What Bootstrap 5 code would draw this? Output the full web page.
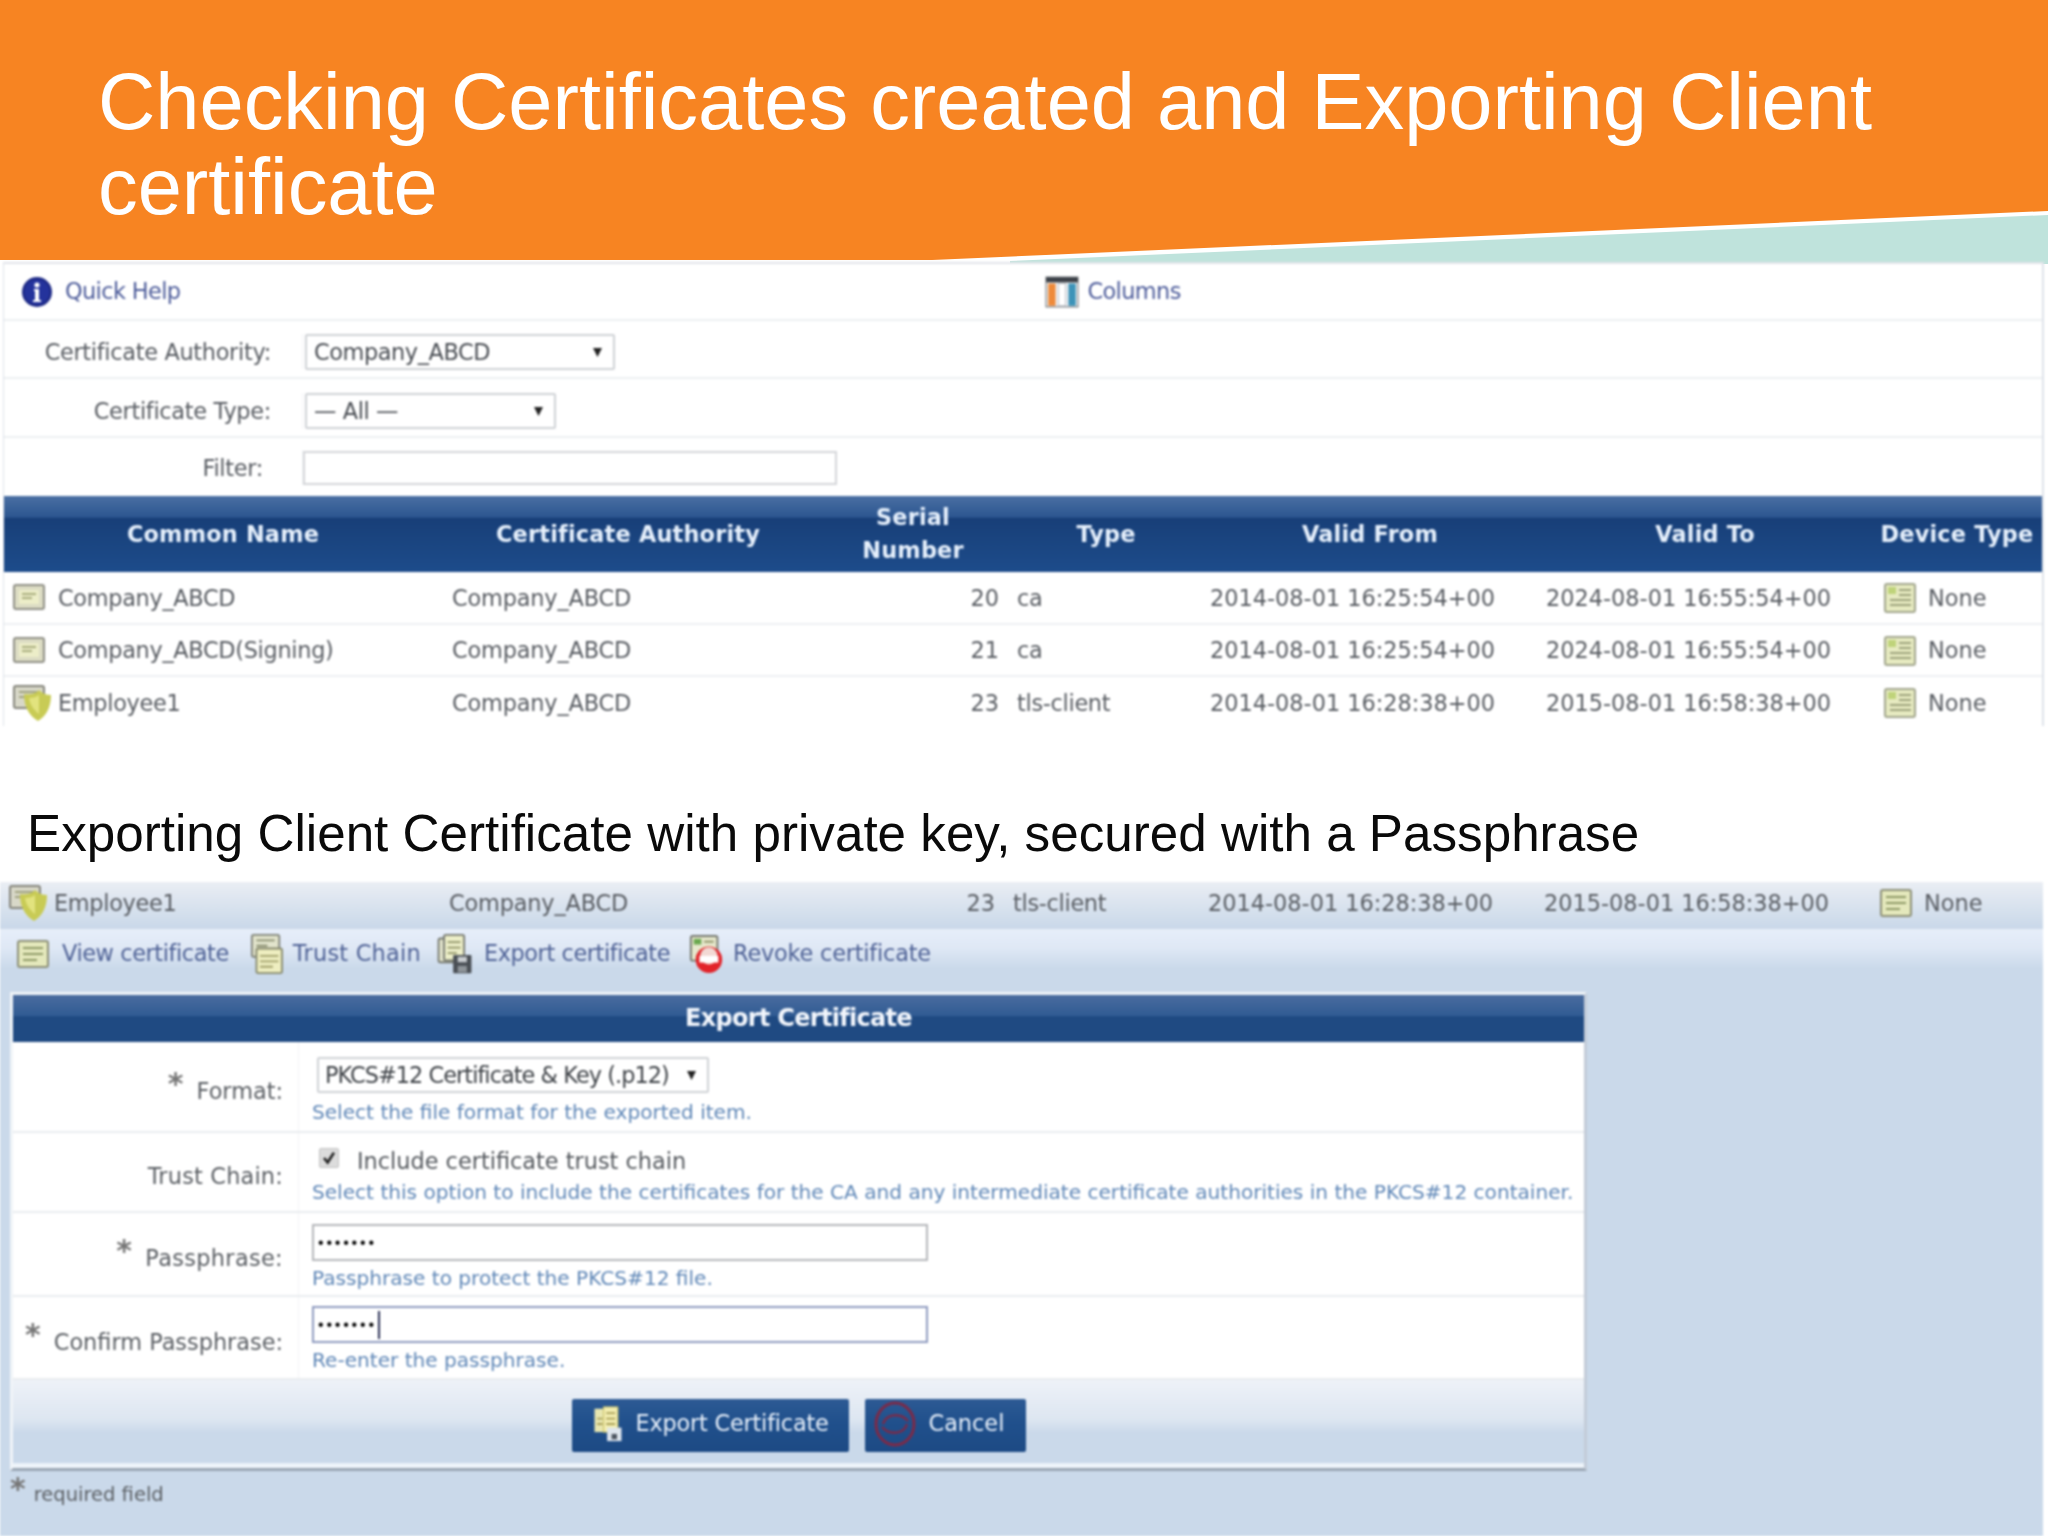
<!DOCTYPE html>
<html lang="en">
<head>
<meta charset="utf-8">
<title>Checking Certificates</title>
<link rel="stylesheet" href="https://cdn.jsdelivr.net/npm/bootstrap@5.3.0/dist/css/bootstrap.min.css">
<style>
html,body{margin:0;background:#fff;}
body{width:2048px;height:1536px;overflow:hidden;font-family:"DejaVu Sans",sans-serif;color:#595d63;}
.deck-banner{height:262px;padding:59px 0 0 98px;}
.deck-shape{left:0;top:0;}
.deck-title{font-family:"Liberation Sans",sans-serif;font-size:79.4px;line-height:85px;color:#fff;margin:0;font-weight:400;filter:blur(.5px);}
.shot-a{margin-left:3px;width:2041px;height:464px;overflow:hidden;background:#fff;border-left:1px solid #dfe3ea;border-right:2px solid #dfe3ea;border-top:2px solid #e2e4ea;filter:blur(.8px);font-size:22.4px;}
.bar-top{height:57px;padding-left:17px;border-bottom:2px solid #eceff2;}
.lnk{color:#4d5c9a;text-decoration:none;letter-spacing:-.6px;}
.lnk-help{margin-left:12px;}
.col-link{margin-left:865px;}
.flt{display:flex;align-items:center;border-bottom:2px solid #eceff2;}
.flt-a{height:58px;padding-top:5px}.flt-b{height:59px;padding-top:7px}.flt-c{height:58px;padding-top:1px;border-bottom:0}
.flt-lbl{width:299px;flex:none;text-align:right;padding:2px 31px 0 0;border-right:1px solid #f2f4f6;letter-spacing:-.3px;white-space:nowrap;}
.flt-c .flt-lbl{padding-right:39px;}
.flt-val{padding-left:2px;}
.pick{font-family:"DejaVu Sans",sans-serif;font-size:22.4px;color:#4a4e54;border:2px solid #cfd2d6;border-radius:2px;padding:0 24px 0 7px;line-height:30px;height:36px;letter-spacing:-.4px;background-position:right 10px center;background-size:11px 14px;background-image:url("data:image/svg+xml,%3Csvg xmlns='http://www.w3.org/2000/svg' viewBox='0 0 11 14'%3E%3Cpath d='M1 3h9L5.500 12z' fill='%23222'/%3E%3C/svg%3E");}
.pick-a{width:310px}.pick-b{width:251px}
.filter-box{width:534px;height:34px;border:2px solid #d4d6d9;border-radius:0;margin-left:-2px;padding:0;}
.tbl.table{--bs-table-bg:transparent;--bs-table-color:#595d63;table-layout:fixed;width:2040px;margin:0;}
.tbl td,.tbl th{padding:0;border:0;vertical-align:middle;white-space:nowrap;}
.tbl thead th{height:76px;text-align:center;color:#e6f0fc;font-weight:700;font-size:22.4px;line-height:33px;letter-spacing:.2px;background:linear-gradient(#4a6fa3 0,#2c5690 28%,#183f78 29%,#1d4c8b 100%);}
.tbl tbody td{height:52px;padding-top:2px;}
.tbl tbody tr+tr td{border-top:2px solid #eef0f3;}
.c1{padding-left:8px!important;letter-spacing:-.3px}.c2{padding-left:10px!important;letter-spacing:-.15px}.c3{padding-right:13px!important;text-align:right}.c4{padding-left:5px!important;letter-spacing:-.3px}.c5{padding-left:10px!important}.c6{padding-left:6px!important}.c7{padding-left:12px!important}
.ico{display:inline-block;vertical-align:middle;}
.ico-name{margin:-4px 12px 0 0;}
.ico-dev{margin:-2px 10px 0 0;}
.ico-sh{margin:-2px 6px 0 0;}
.deck-sub{height:156px;padding:81px 0 0 27px;}
.deck-sub h2{font-family:"Liberation Sans",sans-serif;font-size:51.2px;line-height:54px;font-weight:400;color:#0a0a0a;margin:0;filter:blur(.4px);}
.shot-b{width:2043px;height:654px;background:#cad9ea;filter:blur(.8px);font-size:22.4px;}
.emp-row{background:linear-gradient(#eaeef4,#c9d8e9);}
.emp-row .tbl tbody td{height:47px;padding-top:0;padding-bottom:4px;}
.emp-row .c5{padding-left:12px!important}.emp-row .c6{padding-left:8px!important}.emp-row .c2{padding-left:11px!important}
.acts{height:61px;padding:0 0 12px 16px;background:linear-gradient(#e6eefa 0,#dfe8f5 30%,#cad9ea 65%);border-top:1px solid #e8eef7;}
.acts a{color:#4f6296;text-decoration:none;white-space:nowrap;letter-spacing:-.4px;margin-right:19px;}
.acts .a-chain{letter-spacing:.25px;margin-right:14px;}
.acts .a-revoke{letter-spacing:-.2px;}
.ico-v{margin-right:12px;}
.ico-c{margin-right:8px;}
.ico-e{margin-right:9px;}
.ico-r{margin-right:8px;}
.dlg{margin:2px 0 0 10px;width:1577px;height:479px;background:#fff;border:3px solid #f0f4f8;border-right-color:#c3ccd8;border-bottom-color:#9aa6b4;display:flex;flex-direction:column;}
.dlg-head{height:47px;line-height:47px;text-align:center;color:#f2f6fc;font-weight:700;font-size:24px;background:linear-gradient(#4a6c9f 0,#305b93 45%,#1f4a82 46%,#1f4a82 100%);letter-spacing:-.7px;}
.dlg-row{display:flex;border-bottom:2px solid #e9ecef;}
.r-a{height:91px}.r-b{height:80px}.r-c{height:84px}.r-d{height:83px}
.dlg-lbl{width:286px;flex:none;display:flex;align-items:center;justify-content:flex-end;padding:10px 15px 0 0;border-right:1px solid #f2f4f7;color:#5b5f64;white-space:nowrap;}
.r-b .dlg-lbl{letter-spacing:.2px;}
.r-c .dlg-lbl{letter-spacing:.35px;}
.req{font-size:30px;line-height:20px;margin-right:13px;transform:translateY(-8px);color:#777;font-weight:700;}
.dlg-val{padding-left:13px;flex:1;min-width:0;}
.r-a .dlg-val{padding-top:15px}.r-b .dlg-val{padding-top:13px}.r-c .dlg-val{padding-top:11px}.r-d .dlg-val{padding-top:9px}
.pick-fmt{width:392px;height:36px;margin-left:5px;letter-spacing:-.95px;color:#3f4348;padding-left:6px;}
.hint{color:#5f87b7;font-size:20.1px;line-height:26px;margin-top:4px;white-space:nowrap;}
.hint-a{margin-top:6px;}
.hint-b{margin-top:3px;}
.chk-line{display:flex;align-items:center;line-height:30px;margin-left:7px;color:#55595e;}
.chk-line label{margin-left:18px;}
.tick.form-check-input{width:20px;height:20px;margin:-7px 0 0 0;border:1px solid #c2c2c2;border-radius:2px;}
.tick.form-check-input:checked{background-color:#dcdcdc;border-color:#c2c2c2;background-image:url("data:image/svg+xml,%3Csvg xmlns='http://www.w3.org/2000/svg' viewBox='0 0 20 20'%3E%3Cpath d='M4.500 10l4 5 7-11' fill='none' stroke='%23222' stroke-width='3'/%3E%3C/svg%3E");}
.pass-box{display:block;width:616px;height:37px;border:2px solid #b5b7ba;border-radius:0;padding:0 0 0 4px;font-size:16px;font-family:"Liberation Sans",sans-serif;color:#000;letter-spacing:2.8px;}
.pass-focus{border-color:#8f9bc0;background-image:linear-gradient(#2b2f55,#2b2f55);background-repeat:no-repeat;background-position:64px center;background-size:2px 28px;}
.dlg-foot{flex:1;display:flex;justify-content:center;gap:16px;padding-top:19px;background:linear-gradient(#eef2f8 0,#dde6f1 45%,#cad9ea 60%,#cad9ea 94%,#eef4fa 95%);}
.act-btn.btn{height:53px;background:linear-gradient(#2d5a94,#20508c 45%,#1d4a84);border:0;border-radius:2px;color:#e9f1fb;font-size:22.4px;display:flex;align-items:center;letter-spacing:-.2px;white-space:nowrap;}
.act-export.btn{width:277px;padding:0 0 4px 20px}.act-cancel.btn{width:161px;padding:0 0 4px 7px;letter-spacing:0}
.act-export svg{margin-right:12px;}
.act-cancel svg{margin-right:11px;}
.foot-note{padding:9px 0 0 10px;font-size:19.500px;color:#5b5f64;line-height:30px;display:flex;}
.foot-note .req{margin-right:8px;transform:translateY(-1px);}
</style>
</head>
<body>
<svg width="0" height="0" class="d-block">
<defs>
<symbol id="i-info" viewBox="0 0 32 32"><circle cx="16" cy="16" r="15" fill="#1e2a86"/><circle cx="16" cy="16" r="12.500" fill="#24339c"/><circle cx="16" cy="9" r="2.600" fill="#fff"/><path d="M13 13h5v11h2v2h-8v-2h2v-9h-1z" fill="#fff"/></symbol>
<symbol id="i-cols" viewBox="0 0 32 32"><rect x="1" y="2" width="30" height="28" fill="#f4f6f8" stroke="#6b6f73"/><rect x="1" y="2" width="30" height="5" fill="#3c4148"/><rect x="3" y="8" width="7" height="21" fill="#ee8a3a"/><rect x="12.500" y="8" width="7" height="21" fill="#fff" stroke="#b7bcc4"/><rect x="22" y="8" width="7" height="21" fill="#3d93b8"/></symbol>
<symbol id="i-cert" viewBox="0 0 34 28"><rect x="2" y="2" width="30" height="24" rx="2" fill="#dcdcc4" stroke="#8f8f86" stroke-width="2"/><rect x="7" y="7" width="20" height="14" fill="#ecedc8"/><path d="M10 11h14M10 15h10" stroke="#a9ad7e" stroke-width="2"/></symbol>
<symbol id="i-page" viewBox="0 0 36 32"><rect x="3" y="2" width="30" height="28" rx="2" fill="#e6eac0" stroke="#a2a68e" stroke-width="2"/><rect x="6" y="5" width="8" height="7" fill="#bfd37a"/><path d="M17 8h12M17 13h12M8 18h21M8 23h21" stroke="#9da27c" stroke-width="2"/></symbol>
<symbol id="i-shield" viewBox="0 0 40 38"><rect x="2" y="2" width="30" height="22" rx="2" fill="#d8d8c8" stroke="#85857c" stroke-width="2"/><path d="M7 8h20M7 13h7" stroke="#a0a27e" stroke-width="2"/><path d="M12 10c6 1 12 0 15-4 3 3 7 5 12 5 0 13-5 21-13 26-8-5-14-13-14-27z" fill="#c8cb55"/><path d="M17 14c4 0 8-1 10-3v19c-5-4-9-9-10-16z" fill="#e2e37e"/></symbol>
<symbol id="i-view" viewBox="0 0 34 32"><rect x="2" y="3" width="30" height="26" rx="2" fill="#e4e8bc" stroke="#8d9078" stroke-width="2"/><path d="M7 10h20M7 16h20M7 22h14" stroke="#8f9a66" stroke-width="2"/></symbol>
<symbol id="i-chain" viewBox="0 0 38 46"><rect x="3" y="2" width="30" height="24" rx="2" fill="#e2e4cc" stroke="#7f8278" stroke-width="2"/><path d="M8 8h20M8 14h12" stroke="#8a8e70" stroke-width="2"/><rect x="8" y="17" width="28" height="27" rx="2" fill="#eeeec0" stroke="#85886c" stroke-width="2"/><path d="M12 25h20M12 31h20M12 37h14" stroke="#a1a06a" stroke-width="2"/></symbol>
<symbol id="i-export" viewBox="0 0 40 46"><rect x="2" y="6" width="24" height="26" rx="2" fill="#e2e4cc" stroke="#75786f" stroke-width="2"/><rect x="8" y="2" width="22" height="28" rx="2" fill="#eceec8" stroke="#75786f" stroke-width="2"/><path d="M12 10h14M12 16h14M12 22h10" stroke="#8f9266" stroke-width="2"/><rect x="18" y="24" width="20" height="20" rx="1" fill="#4a4f55"/><rect x="23" y="26" width="10" height="6" fill="#c8ccd0"/><rect x="23" y="36" width="10" height="7" fill="#8e9499"/></symbol>
<symbol id="i-revoke" viewBox="0 0 38 44"><rect x="2" y="3" width="28" height="26" rx="2" fill="#e6e8cc" stroke="#75786f" stroke-width="2"/><rect x="5" y="6" width="8" height="6" fill="#6aa84f"/><path d="M16 9h10" stroke="#8f9266" stroke-width="2"/><circle cx="21" cy="28" r="14" fill="#e2242a"/><circle cx="21" cy="24" r="9" fill="#f2d9d4"/><rect x="11" y="24" width="20" height="7" fill="#fff"/></symbol>
<symbol id="i-bexp" viewBox="0 0 34 40"><rect x="2" y="3" width="16" height="26" fill="#e7e6b0"/><rect x="12" y="1" width="16" height="28" fill="#f2edb0" stroke="#c7bd60"/><path d="M15 8h10M15 14h10M15 20h10M5 14h6M5 20h6" stroke="#a9a058" stroke-width="2"/><rect x="16" y="24" width="16" height="15" fill="#dfe6ee"/><rect x="21" y="31" width="6" height="6" fill="#4d5560"/></symbol>
<symbol id="i-bcan" viewBox="0 0 46 48"><ellipse cx="23" cy="24" rx="19" ry="21" fill="none" stroke="#7c2a48" stroke-width="3"/><path d="M11 24c3-10 17-12 25-3M35 24c-3 10-17 12-25 3" fill="none" stroke="#7c2a48" stroke-width="2.500"/></symbol>
</defs>
</svg>

<header class="deck-banner position-relative">
  <svg class="deck-shape position-absolute" width="2048" height="264" viewBox="0 0 2048 264"><rect width="2048" height="264" fill="#fff"/><polygon points="1010,264 1010,261 2048,215 2048,264" fill="#bfe3dc"/><polygon points="0,0 2048,0 2048,211 932,260 0,260" fill="#f78422"/></svg>
  <h1 class="deck-title position-relative">Checking Certificates created and Exporting Client<br>certificate</h1>
</header>

<section class="shot-a">
  <div class="bar-top d-flex align-items-center">
    <svg class="ico" width="32" height="32" aria-hidden="true"><use href="#i-info"/></svg>
    <a class="lnk lnk-help" href="#">Quick Help</a>
    <svg class="ico col-link" width="34" height="34" aria-hidden="true"><use href="#i-cols"/></svg>
    <a class="lnk ms-2" href="#">Columns</a>
  </div>
  <div class="flt flt-a"><div class="flt-lbl">Certificate Authority:</div><div class="flt-val"><select class="form-select pick pick-a"><option>Company_ABCD</option></select></div></div>
  <div class="flt flt-b"><div class="flt-lbl">Certificate Type:</div><div class="flt-val"><select class="form-select pick pick-b"><option>— All —</option></select></div></div>
  <div class="flt flt-c"><div class="flt-lbl">Filter:</div><div class="flt-val"><input class="form-control filter-box" type="text"></div></div>
  <table class="table tbl">
    <colgroup><col style="width:438px"><col style="width:372px"><col style="width:198px"><col style="width:188px"><col style="width:340px"><col style="width:330px"><col style="width:174px"></colgroup>
    <thead><tr><th>Common Name</th><th>Certificate Authority</th><th>Serial<br>Number</th><th>Type</th><th>Valid From</th><th>Valid To</th><th>Device Type</th></tr></thead>
    <tbody>
      <tr><td class="c1"><svg class="ico ico-name" width="34" height="28" aria-hidden="true"><use href="#i-cert"/></svg>Company_ABCD</td><td class="c2">Company_ABCD</td><td class="c3">20</td><td class="c4">ca</td><td class="c5">2014-08-01 16:25:54+00</td><td class="c6">2024-08-01 16:55:54+00</td><td class="c7"><svg class="ico ico-dev" width="36" height="32" aria-hidden="true"><use href="#i-page"/></svg>None</td></tr>
      <tr><td class="c1"><svg class="ico ico-name" width="34" height="28" aria-hidden="true"><use href="#i-cert"/></svg>Company_ABCD(Signing)</td><td class="c2">Company_ABCD</td><td class="c3">21</td><td class="c4">ca</td><td class="c5">2014-08-01 16:25:54+00</td><td class="c6">2024-08-01 16:55:54+00</td><td class="c7"><svg class="ico ico-dev" width="36" height="32" aria-hidden="true"><use href="#i-page"/></svg>None</td></tr>
      <tr><td class="c1"><svg class="ico ico-sh" width="40" height="38" aria-hidden="true"><use href="#i-shield"/></svg>Employee1</td><td class="c2">Company_ABCD</td><td class="c3">23</td><td class="c4">tls-client</td><td class="c5">2014-08-01 16:28:38+00</td><td class="c6">2015-08-01 16:58:38+00</td><td class="c7"><svg class="ico ico-dev" width="36" height="32" aria-hidden="true"><use href="#i-page"/></svg>None</td></tr>
    </tbody>
  </table>
</section>

<section class="deck-sub"><h2>Exporting Client Certificate with private key, secured with a Passphrase</h2></section>

<section class="shot-b">
  <div class="emp-row">
    <table class="table tbl">
      <colgroup><col style="width:438px"><col style="width:372px"><col style="width:198px"><col style="width:188px"><col style="width:340px"><col style="width:330px"><col style="width:174px"></colgroup>
      <tbody><tr><td class="c1"><svg class="ico ico-sh" width="40" height="38" aria-hidden="true"><use href="#i-shield"/></svg>Employee1</td><td class="c2">Company_ABCD</td><td class="c3">23</td><td class="c4">tls-client</td><td class="c5">2014-08-01 16:28:38+00</td><td class="c6">2015-08-01 16:58:38+00</td><td class="c7"><svg class="ico ico-dev" width="36" height="32" aria-hidden="true"><use href="#i-view"/></svg>None</td></tr></tbody>
    </table>
  </div>
  <nav class="acts d-flex align-items-center">
    <svg class="ico ico-v" width="34" height="32" aria-hidden="true"><use href="#i-view"/></svg><a href="#">View certificate</a>
    <svg class="ico ico-c" width="37" height="42" aria-hidden="true"><use href="#i-chain"/></svg><a href="#" class="a-chain">Trust Chain</a>
    <svg class="ico ico-e" width="40" height="42" aria-hidden="true"><use href="#i-export"/></svg><a href="#">Export certificate</a>
    <svg class="ico ico-r" width="36" height="42" aria-hidden="true"><use href="#i-revoke"/></svg><a href="#" class="a-revoke">Revoke certificate</a>
  </nav>
  <div class="dlg">
    <div class="dlg-head">Export Certificate</div>
    <div class="dlg-row r-a"><div class="dlg-lbl"><span class="req">*</span>Format:</div><div class="dlg-val"><select class="form-select pick pick-fmt"><option>PKCS#12 Certificate &amp; Key (.p12)</option></select><div class="hint hint-a">Select the file format for the exported item.</div></div></div>
    <div class="dlg-row r-b"><div class="dlg-lbl">Trust Chain:</div><div class="dlg-val"><div class="chk-line"><input id="tc" class="form-check-input tick" type="checkbox" checked><label for="tc">Include certificate trust chain</label></div><div class="hint hint-b">Select this option to include the certificates for the CA and any intermediate certificate authorities in the PKCS#12 container.</div></div></div>
    <div class="dlg-row r-c"><div class="dlg-lbl"><span class="req">*</span>Passphrase:</div><div class="dlg-val"><input class="form-control pass-box" type="password" value="1234567"><div class="hint">Passphrase to protect the PKCS#12 file.</div></div></div>
    <div class="dlg-row r-d"><div class="dlg-lbl"><span class="req">*</span>Confirm Passphrase:</div><div class="dlg-val"><input class="form-control pass-box pass-focus" type="password" value="1234567"><div class="hint">Re-enter the passphrase.</div></div></div>
    <div class="dlg-foot">
      <button type="button" class="btn act-btn act-export"><svg width="32" height="36" aria-hidden="true"><use href="#i-bexp"/></svg>Export Certificate</button>
      <button type="button" class="btn act-btn act-cancel"><svg width="46" height="48" aria-hidden="true"><use href="#i-bcan"/></svg>Cancel</button>
    </div>
  </div>
  <div class="foot-note"><span class="req">*</span>required field</div>
</section>
<script src="https://cdn.jsdelivr.net/npm/bootstrap@5.3.0/dist/js/bootstrap.bundle.min.js"></script>
</body>
</html>
